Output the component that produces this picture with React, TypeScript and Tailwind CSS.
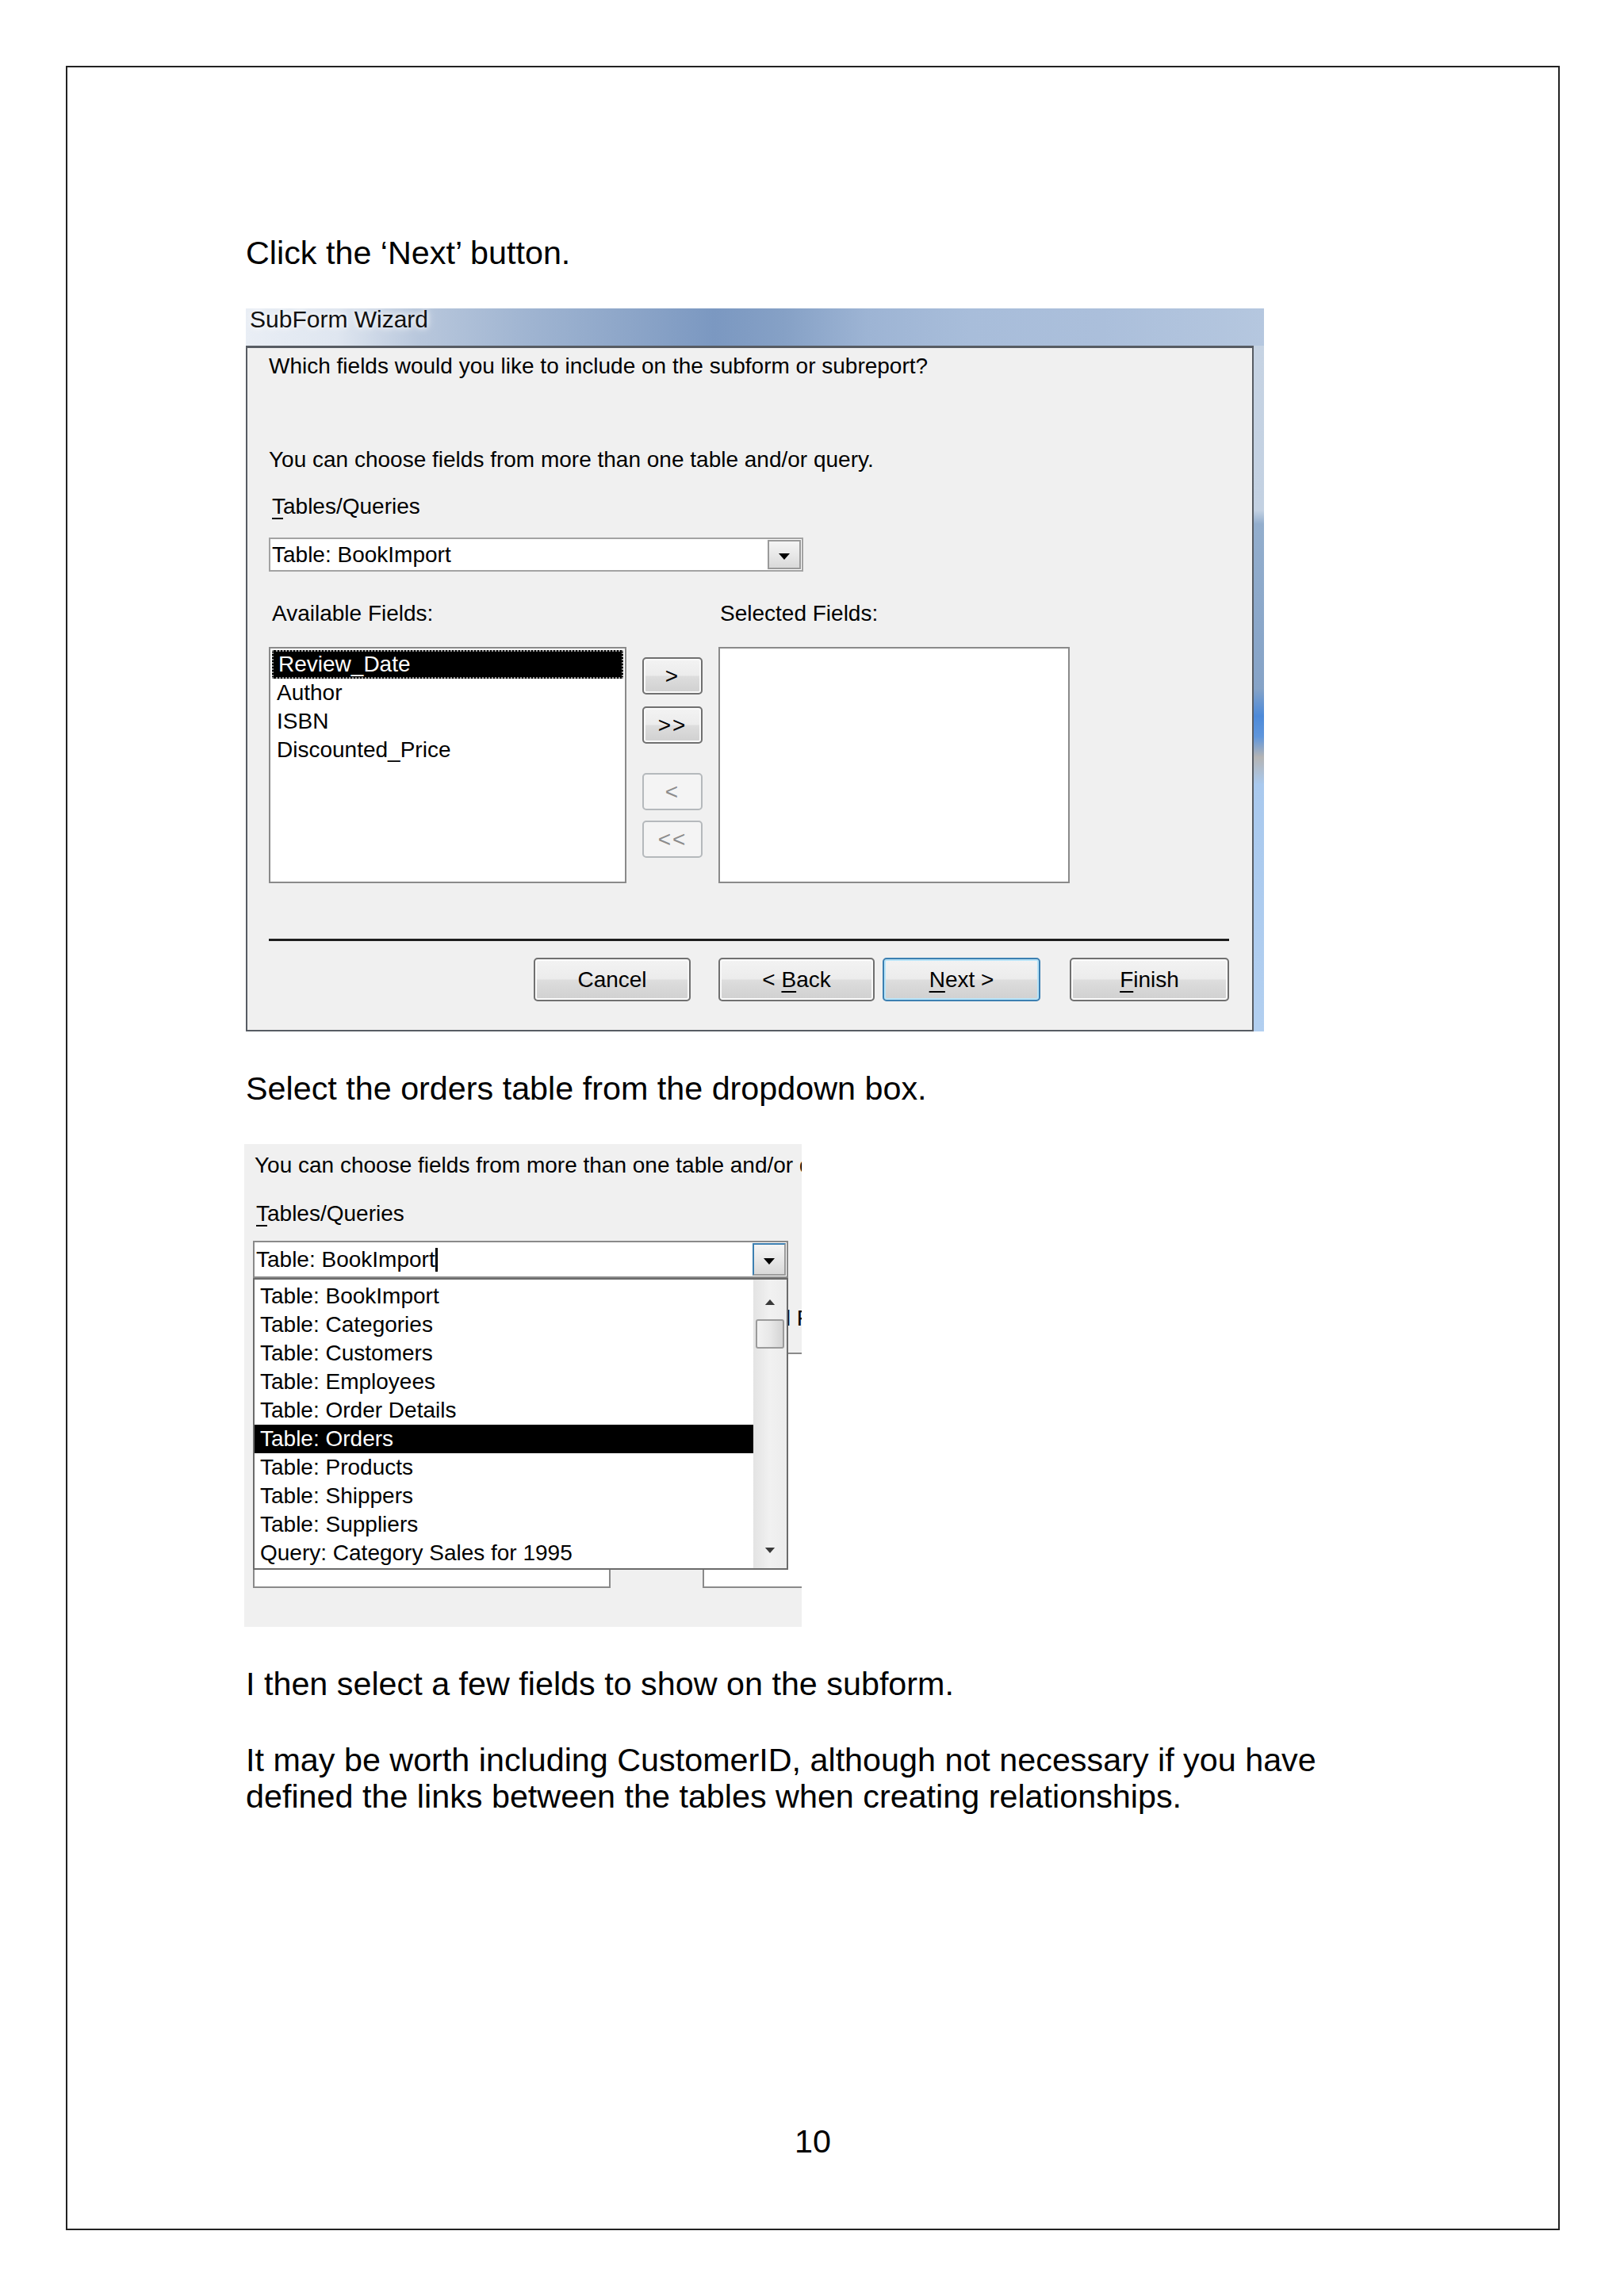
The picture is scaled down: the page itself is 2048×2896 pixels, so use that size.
import React from 'react';

const FIELDS = ['Review_Date', 'Author', 'ISBN', 'Discounted_Price'];

const SOURCES = [
  'Table: BookImport',
  'Table: Categories',
  'Table: Customers',
  'Table: Employees',
  'Table: Order Details',
  'Table: Orders',
  'Table: Products',
  'Table: Shippers',
  'Table: Suppliers',
  'Query: Category Sales for 1995',
];

function Triangle({ up, className }: { up?: boolean; className?: string }) {
  return (
    <svg width="16" height="10" viewBox="0 0 16 10" className={className}>
      <path d={up ? 'M1 9h14L8 1z' : 'M1 1h14L8 9z'} fill="currentColor" />
    </svg>
  );
}

function WizardButton({ children, focused, className = '' }: { children: React.ReactNode; focused?: boolean; className?: string }) {
  return (
    <div
      className={`h-[55px] shrink-0 flex items-center justify-center rounded-[5px] border-2 bg-[linear-gradient(180deg,#f3f3f3_0%,#ececec_48%,#dddddd_52%,#d0d0d0_100%)] ${
        focused ? 'border-[#3c7fb1] shadow-[inset_0_0_0_2px_#b9e4f8]' : 'border-[#707070] shadow-[inset_0_0_0_2px_#fafafa]'
      } ${className}`}
    >
      {children}
    </div>
  );
}

function ArrowButton({ label, disabled, className = '' }: { label: string; disabled?: boolean; className?: string }) {
  return (
    <div
      className={`h-[47px] w-[76px] flex items-center justify-center rounded-[5px] border-2 tracking-[2px] ${
        disabled
          ? 'border-[#b5b9bc] bg-[#f4f4f4] text-[#8c8c8c]'
          : 'border-[#707070] bg-[linear-gradient(180deg,#f3f3f3_0%,#ececec_48%,#dddddd_52%,#d0d0d0_100%)] shadow-[inset_0_0_0_2px_#fafafa]'
      } ${className}`}
    >
      {label}
    </div>
  );
}

function ComboBox({ caret, active }: { caret?: boolean; active?: boolean }) {
  return (
    <div className={`flex h-full bg-white border-2 ${active ? 'border-[#8a8a8a]' : 'border-[#a3a3a3]'}`}>
      <div className="flex-1 flex items-center pl-[2px]">
        Table: BookImport
        {caret && <span className="inline-block w-[3px] h-[30px] bg-black" />}
      </div>
      <div
        className={`w-[42px] m-[1px] flex items-center justify-center border-2 bg-[linear-gradient(180deg,#f5f5f5_0%,#e8e8e8_50%,#d9d9d9_100%)] ${
          active ? 'border-[#9a9a9a] border-l-[#3c7fb1] border-t-[#3c7fb1]' : 'border-[#9a9a9a]'
        }`}
      >
        <Triangle className="text-black mt-[4px]" />
      </div>
    </div>
  );
}

function SubFormWizard() {
  return (
    <div className="mt-[47px] w-[1284px] h-[912px] flex flex-col text-[28px] leading-[34px]">
      <div className="h-[47px] shrink-0 flex items-start pl-[5px] bg-[linear-gradient(90deg,#e9eef5_0%,#dfe6f0_9%,#b8c7dc_17%,#9fb4d1_28%,#8ca5c8_38%,#7b98c1_46%,#86a1c6_53%,#9db4d4_61%,#a8bdda_71%,#abbfdb_84%,#b5c7df_100%)]">
        <span className="text-[30px] leading-[28px] text-[#111] [text-shadow:0_0_12px_#ffffff,0_0_6px_#ffffff]">SubForm Wizard</span>
      </div>
      <div className="flex flex-1 min-h-0">
        <div className="flex-1 flex flex-col bg-[#f0f0f0] border-2 border-t-[3px] border-[#575c63] pl-[27px] pr-[29px]">
          <p className="mt-[6px]">Which fields would you like to include on the subform or subreport?</p>
          <p className="mt-[84px]">You can choose fields from more than one table and/or query.</p>
          <p className="mt-[25px] ml-[4px]">
            <span className="underline underline-offset-[5px]">T</span>ables/Queries
          </p>
          <div className="mt-[22px] w-[674px] h-[43px]">
            <ComboBox />
          </div>
          <div className="mt-[36px] flex">
            <p className="w-[567px] pl-[4px]">Available Fields:</p>
            <p className="pl-[2px]">Selected Fields:</p>
          </div>
          <div className="mt-[25px] flex gap-[20px] h-[298px]">
            <div className="w-[451px] bg-white border-2 border-[#8a8a8a] p-[2px]">
              {FIELDS.map((f, i) => (
                <div
                  key={f}
                  className={`h-[36px] flex items-center pl-[6px] ${
                    i === 0 ? 'bg-black text-white border-2 border-dotted border-[#9a9a9a]' : ''
                  }`}
                >
                  {f}
                </div>
              ))}
            </div>
            <div className="w-[76px] flex flex-col pt-[13px]">
              <ArrowButton label=">" />
              <ArrowButton label=">>" className="mt-[15px]" />
              <ArrowButton label="<" disabled className="mt-[37px]" />
              <ArrowButton label="<<" disabled className="mt-[13px]" />
            </div>
            <div className="w-[443px] bg-white border-2 border-[#8a8a8a]" />
          </div>
          <div className="mt-[70px] h-[3px] bg-[#1e1e1e]" />
          <div className="mt-[21px] flex justify-end">
            <WizardButton className="w-[198px]">Cancel</WizardButton>
            <WizardButton className="w-[197px] ml-[35px]">
              &lt;&nbsp;<span className="underline underline-offset-[5px]">B</span>ack
            </WizardButton>
            <WizardButton focused className="w-[199px] ml-[10px]">
              <span className="underline underline-offset-[5px]">N</span>ext &gt;
            </WizardButton>
            <WizardButton className="w-[201px] ml-[37px]">
              <span className="underline underline-offset-[5px]">F</span>inish
            </WizardButton>
          </div>
        </div>
        <div className="w-[13px] bg-[linear-gradient(180deg,#c6d3e3_0%,#c3d1e2_24%,#93aecd_26%,#86a3c7_50%,#4d8ad9_54%,#5f96dc_57%,#b4b4b4_60%,#a9c9ee_64%,#b2cff0_100%)]" />
      </div>
    </div>
  );
}

function DropdownShot() {
  return (
    <div className="mt-[47px] -ml-[2px] w-[703px] h-[609px] bg-[#f0f0f0] overflow-hidden pl-[11px] pt-[10px] text-[28px] leading-[34px] whitespace-nowrap">
      <p className="ml-[2px]">You can choose fields from more than one table and/or query.</p>
      <p className="mt-[27px] ml-[4px]">
        <span className="underline underline-offset-[5px]">T</span>ables/Queries
      </p>
      <div className="relative mt-[17px] w-[675px] h-[47px]">
        <ComboBox caret active />
        <div className="absolute left-0 top-full z-10 w-full h-[368px] bg-white border-2 border-[#6b6b6b] flex">
          <div className="flex-1 pt-[3px]">
            {SOURCES.map((s) => (
              <div
                key={s}
                className={`h-[36px] flex items-center pl-[7px] ${s === 'Table: Orders' ? 'bg-black text-white' : ''}`}
              >
                {s}
              </div>
            ))}
          </div>
          <div className="w-[42px] flex flex-col items-center bg-[linear-gradient(90deg,#e3e3e3_0%,#f1f1f1_50%,#ececec_100%)] pt-[24px] pb-[18px]">
            <Triangle up className="text-[#3a3a3a] w-[14px] h-[9px]" />
            <div className="mt-[17px] w-[36px] h-[37px] rounded-[3px] border-2 border-[#9b9b9b] bg-[linear-gradient(90deg,#f2f2f2_0%,#e8e8e8_50%,#d4d4d4_100%)]" />
            <Triangle className="mt-auto text-[#3a3a3a] w-[14px] h-[9px]" />
          </div>
        </div>
      </div>
      <div className="mt-[34px] flex">
        <p className="w-[567px] shrink-0 pl-[4px]">Available Fields:</p>
        <p className="shrink-0 pl-[2px]">Selected Fields:</p>
      </div>
      <div className="mt-[26px] flex gap-[20px] h-[297px]">
        <div className="w-[451px] shrink-0 bg-white border-2 border-[#8a8a8a]" />
        <div className="w-[76px] shrink-0" />
        <div className="w-[443px] shrink-0 bg-white border-2 border-[#8a8a8a]" />
      </div>
    </div>
  );
}

export default function App() {
  return (
    <div className="w-[2048px] h-[2896px] bg-white pt-[83px] pl-[83px] pr-[81px] font-['Liberation_Sans',Arial,sans-serif] text-black">
      <div className="h-[2730px] border-2 border-[#222] flex flex-col">
        <div className="pl-[225px] pt-[211px] text-[41.3px] leading-[46px]">
          <p>Click the ‘Next’ button.</p>
          <SubFormWizard />
          <p className="mt-[49px]">Select the orders table from the dropdown box.</p>
          <DropdownShot />
          <p className="mt-[49px]">I then select a few fields to show on the subform.</p>
          <p className="mt-[50px] whitespace-nowrap">
            It may be worth including CustomerID, although not necessary if you have
            <br />
            defined the links between the tables when creating relationships.
          </p>
        </div>
        <div className="mt-auto pb-[87px] text-center text-[41.3px] leading-[46px]">10</div>
      </div>
    </div>
  );
}
